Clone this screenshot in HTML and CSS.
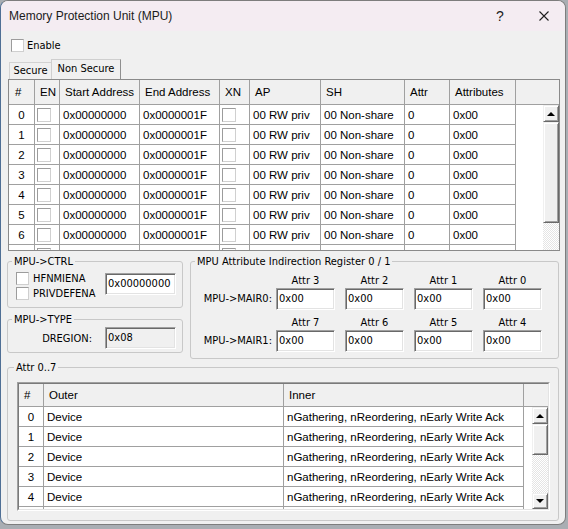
FILE: index.html
```html
<!DOCTYPE html>
<html>
<head>
<meta charset="utf-8">
<link rel="stylesheet" href="styles.css">
</head>
<body>
<div class="window">
  <div class="titlebar">
    <span class="title">Memory Protection Unit (MPU)</span>
    <span class="help">?</span>
    <svg class="close" width="10" height="10" viewBox="0 0 10 10"><path d="M0.5 0.5L9.5 9.5M9.5 0.5L0.5 9.5" stroke="#1f1f1f" stroke-width="1.1" fill="none"/></svg>
  </div>
  <div class="content">
    <div class="enable"><span class="cb"></span><span class="lbl">Enable</span></div>
    <div class="tabs"><div class="tab">Secure</div><div class="tab active">Non Secure</div></div>

    <div class="tgrid">
      <div class="thead">
        <div class="hnum">#</div><div>EN</div><div>Start Address</div><div>End Address</div><div>XN</div><div>AP</div><div>SH</div><div>Attr</div><div>Attributes</div><div class="hx"></div>
      </div>
      <div class="tbody">
        <div class="trows">
          <div class="trow"><div class="num">0</div><div class="cbc"><span class="gcb"></span></div><div>0x00000000</div><div>0x0000001F</div><div class="cbc"><span class="gcb"></span></div><div>00 RW priv</div><div>00 Non-share</div><div>0</div><div>0x00</div></div>
          <div class="trow"><div class="num">1</div><div class="cbc"><span class="gcb"></span></div><div>0x00000000</div><div>0x0000001F</div><div class="cbc"><span class="gcb"></span></div><div>00 RW priv</div><div>00 Non-share</div><div>0</div><div>0x00</div></div>
          <div class="trow"><div class="num">2</div><div class="cbc"><span class="gcb"></span></div><div>0x00000000</div><div>0x0000001F</div><div class="cbc"><span class="gcb"></span></div><div>00 RW priv</div><div>00 Non-share</div><div>0</div><div>0x00</div></div>
          <div class="trow"><div class="num">3</div><div class="cbc"><span class="gcb"></span></div><div>0x00000000</div><div>0x0000001F</div><div class="cbc"><span class="gcb"></span></div><div>00 RW priv</div><div>00 Non-share</div><div>0</div><div>0x00</div></div>
          <div class="trow"><div class="num">4</div><div class="cbc"><span class="gcb"></span></div><div>0x00000000</div><div>0x0000001F</div><div class="cbc"><span class="gcb"></span></div><div>00 RW priv</div><div>00 Non-share</div><div>0</div><div>0x00</div></div>
          <div class="trow"><div class="num">5</div><div class="cbc"><span class="gcb"></span></div><div>0x00000000</div><div>0x0000001F</div><div class="cbc"><span class="gcb"></span></div><div>00 RW priv</div><div>00 Non-share</div><div>0</div><div>0x00</div></div>
          <div class="trow"><div class="num">6</div><div class="cbc"><span class="gcb"></span></div><div>0x00000000</div><div>0x0000001F</div><div class="cbc"><span class="gcb"></span></div><div>00 RW priv</div><div>00 Non-share</div><div>0</div><div>0x00</div></div>
          <div class="trow"><div class="num">7</div><div class="cbc"><span class="gcb"></span></div><div>0x00000000</div><div>0x0000001F</div><div class="cbc"><span class="gcb"></span></div><div>00 RW priv</div><div>00 Non-share</div><div>0</div><div>0x00</div></div>
        </div>
        <div class="spacer"></div>
        <div class="vsb">
          <div class="sbtn up"><span class="arr-up"></span></div>
          <div class="thumb t-top"></div>
          <div class="track"></div>
        </div>
      </div>
    </div>

    <div class="middle">
      <div class="leftcol">
        <fieldset class="grp ctrl">
          <legend>MPU-&gt;CTRL</legend>
          <div class="ctrl-row">
            <div class="checks">
              <div class="chk"><span class="cb"></span><span class="lbl">HFNMIENA</span></div>
              <div class="chk"><span class="cb"></span><span class="lbl">PRIVDEFENA</span></div>
            </div>
            <div class="tb wide">0x00000000</div>
          </div>
        </fieldset>
        <fieldset class="grp type">
          <legend>MPU-&gt;TYPE</legend>
          <div class="type-row">
            <span class="lbl">DREGION:</span>
            <div class="tb wide ro">0x08</div>
          </div>
        </fieldset>
      </div>
      <fieldset class="grp mair">
        <legend>MPU Attribute Indirection Register 0 / 1</legend>
        <div class="mair-grid">
          <div></div><div class="al">Attr 3</div><div class="al">Attr 2</div><div class="al">Attr 1</div><div class="al">Attr 0</div>
          <div class="rl">MPU-&gt;MAIR0:</div><div class="tb sm">0x00</div><div class="tb sm">0x00</div><div class="tb sm">0x00</div><div class="tb sm">0x00</div>
          <div></div><div class="al">Attr 7</div><div class="al">Attr 6</div><div class="al">Attr 5</div><div class="al">Attr 4</div>
          <div class="rl">MPU-&gt;MAIR1:</div><div class="tb sm">0x00</div><div class="tb sm">0x00</div><div class="tb sm">0x00</div><div class="tb sm">0x00</div>
        </div>
      </fieldset>
    </div>

    <fieldset class="grp attrs">
      <legend>Attr 0..7</legend>
      <div class="bgrid">
        <div class="bgrid-in">
          <div class="bhead"><div>#</div><div>Outer</div><div>Inner</div><div class="hx"></div></div>
          <div class="bbody">
            <div class="brows">
              <div class="brow"><div class="num">0</div><div>Device</div><div>nGathering, nReordering, nEarly Write Ack</div></div>
              <div class="brow"><div class="num">1</div><div>Device</div><div>nGathering, nReordering, nEarly Write Ack</div></div>
              <div class="brow"><div class="num">2</div><div>Device</div><div>nGathering, nReordering, nEarly Write Ack</div></div>
              <div class="brow"><div class="num">3</div><div>Device</div><div>nGathering, nReordering, nEarly Write Ack</div></div>
              <div class="brow"><div class="num">4</div><div>Device</div><div>nGathering, nReordering, nEarly Write Ack</div></div>
              <div class="brow"><div class="num">5</div><div>Device</div><div>nGathering, nReordering, nEarly Write Ack</div></div>
            </div>
            <div class="bspacer"></div>
            <div class="vsb">
              <div class="sbtn up"><span class="arr-up"></span></div>
              <div class="thumb t-bot"></div>
              <div class="track"></div>
              <div class="sbtn dn"><span class="arr-dn"></span></div>
            </div>
          </div>
        </div>
      </div>
    </fieldset>
  </div>
</div>
</body>
</html>
```
FILE: styles.css
```css
html, body {
  margin: 0;
  padding: 0;
  background: #a9aeb3;
}

.window {
  width: 566px;
  height: 525px;
  box-sizing: border-box;
  border: 1px solid #7d7d7d;
  border-left-color: #4f6f95;
  border-radius: 8px;
  background: #f0f0f0;
  overflow: hidden;
  font-family: "DejaVu Sans Condensed", "DejaVu Sans", sans-serif;
  font-size: 11px;
  color: #000;
}

/* title bar */
.titlebar {
  height: 30px;
  display: flex;
  align-items: center;
  padding: 0 16px 0 8px;
  background: #f4ecf2;
}
.title {
  font-family: "Liberation Sans", sans-serif;
  font-size: 12px;
  color: #1b1b1b;
}
.help {
  margin-left: auto;
  margin-right: 35px;
  width: 8px;
  font-family: "Liberation Sans", sans-serif;
  font-size: 14px;
  color: #1b1b1b;
}
.close { display: block; }

.content { padding-left: 6px; }

/* checkboxes */
.cb {
  display: block;
  width: 13px;
  height: 13px;
  box-sizing: border-box;
  border: 1px solid;
  border-color: #9c9c9c #cfcfcf #cfcfcf #9c9c9c;
  background: #fff;
  flex: none;
}
.lbl { line-height: 13px; white-space: nowrap; }

.enable {
  display: flex;
  align-items: flex-start;
  height: 28px;
  box-sizing: border-box;
  padding: 8px 0 0 4px;
}
.enable .lbl { margin-left: 3px; }

/* tabs */
.tabs {
  display: flex;
  align-items: flex-end;
  height: 20px;
  margin-left: 2px;
}
.tab {
  width: 42px;
  height: 17px;
  box-sizing: border-box;
  border-top: 1px solid #d2d2d2;
  border-left: 1px solid #d2d2d2;
  text-align: center;
  line-height: 16px;
  white-space: nowrap;
}
.tab.active {
  width: 70px;
  height: 20px;
  border-top-color: #cfcfcf;
  border-left-color: #cfcfcf;
  border-right: 1px solid #8f8f8f;
  line-height: 18px;
}

/* top grid */
.tgrid {
  margin-left: 1px;
  width: 552px;
  height: 172px;
  box-sizing: border-box;
  border: 1px solid #8a8a8a;
  background: #fff;
  overflow: hidden;
  font-family: "Liberation Sans", sans-serif;
  font-size: 11.5px;
}
.thead {
  display: grid;
  grid-template-columns: 26px 25px 80px 80px 30px 71px 84px 45px 66px 43px;
  height: 25px;
  box-sizing: border-box;
  background: #f0f0f0;
  border-bottom: 1px solid #a0a0a0;
}
.thead > div, .bhead > div {
  border-right: 1px solid #a0a0a0;
  padding-left: 5px;
  line-height: 24px;
  white-space: nowrap;
  overflow: hidden;
}
.thead > .hnum { padding-left: 6px; }
.thead > .hx, .bhead > .hx { border-right: none; }

.tbody {
  display: flex;
  height: 145px;
  overflow: hidden;
}
.trows { width: 507px; flex: none; }
.trow {
  display: grid;
  grid-template-columns: 26px 25px 80px 80px 30px 71px 84px 45px 66px;
  height: 20px;
  box-sizing: border-box;
  border-bottom: 1px solid #a0a0a0;
}
.trow > div, .brow > div {
  display: flex;
  align-items: center;
  border-right: 1px solid #a0a0a0;
  padding-left: 3px;
  white-space: nowrap;
  overflow: hidden;
}
.trow > .num, .brow > .num {
  justify-content: center;
  padding-left: 0;
}
.trow > .cbc { padding-left: 2px; }
.gcb {
  display: block;
  width: 14px;
  height: 14px;
  box-sizing: border-box;
  border: 1px solid;
  border-color: #9c9c9c #d0d0d0 #d0d0d0 #9c9c9c;
  background: #fff;
}
.spacer { flex: 1; }

/* scrollbars */
.vsb {
  width: 16px;
  flex: none;
  display: flex;
  flex-direction: column;
  background: repeating-conic-gradient(#ffffff 0 25%, #e4e4e4 0 50%) 0 0 / 2px 2px;
}
.sbtn, .thumb {
  box-sizing: border-box;
  background: #f0f0f0;
  border: 1px solid;
  border-color: #f0f0f0 #696969 #696969 #f0f0f0;
  box-shadow: inset 1px 1px 0 #ffffff, inset -1px -1px 0 #a0a0a0;
  flex: none;
}
.sbtn {
  height: 17px;
  display: flex;
  align-items: center;
  justify-content: center;
}
.sbtn.dn { height: 16px; }
.arr-up {
  width: 0;
  height: 0;
  border-left: 4px solid transparent;
  border-right: 4px solid transparent;
  border-bottom: 4px solid #000;
}
.arr-dn {
  width: 0;
  height: 0;
  border-left: 4px solid transparent;
  border-right: 4px solid transparent;
  border-top: 4px solid #000;
}
.t-top { height: 101px; }
.t-bot { height: 31px; }
.track { flex: 1; }

/* group boxes */
.grp {
  margin: 0;
  padding: 0;
  min-width: 0;
  border: 1px solid #c8c8c8;
  border-radius: 3px;
  box-sizing: border-box;
}
.grp legend {
  margin-left: 4px;
  padding: 0 2px;
  line-height: 13px;
  white-space: nowrap;
}

.middle {
  display: flex;
  align-items: flex-start;
  gap: 7px;
  margin-top: 4px;
}
.leftcol { width: 176px; flex: none; }

.ctrl { padding: 4px 6px 0 8px; }
.ctrl legend, .type legend { margin-left: -4px; }
.ctrl-row {
  display: flex;
  height: 35px;
}
.checks {
  width: 89px;
  display: flex;
  flex-direction: column;
  gap: 2px;
}
.chk { display: flex; align-items: center; }
.chk .lbl { margin-left: 4px; }
.ctrl-row .tb { margin-top: 1px; }

.type {
  margin-top: 5px;
  padding: 1px 6px 3px 8px;
}
.type-row {
  display: flex;
  justify-content: flex-end;
  align-items: center;
  gap: 13px;
}

/* text boxes */
.tb {
  height: 22px;
  box-sizing: border-box;
  border: 1px solid;
  border-color: #a0a0a0 #ffffff #ffffff #a0a0a0;
  box-shadow: inset 1px 1px 0 #696969, inset -1px -1px 0 #e3e3e3;
  background: #fff;
  padding-left: 2px;
  line-height: 20px;
  white-space: nowrap;
}
.tb.wide { width: 71px; }
.tb.sm { width: 59px; }
.tb.ro { background: #f0f0f0; }

.mair {
  width: 369px;
  flex: none;
  padding: 0 0 6px 0;
}
.mair-grid {
  display: grid;
  grid-template-columns: 85px repeat(4, 69px);
  grid-template-rows: 20px 22px 20px 22px;
}
.mair-grid .al {
  width: 59px;
  align-self: end;
  text-align: center;
  line-height: 13px;
  padding-bottom: 1px;
  white-space: nowrap;
}
.mair-grid .rl {
  text-align: right;
  padding-right: 4px;
  line-height: 22px;
  white-space: nowrap;
}

/* attr group */
.attrs {
  margin-top: 2px;
  width: 552px;
  padding: 8px 8px 9px 9px;
}
.attrs legend { margin-left: -3px; }

.bgrid {
  width: 533px;
  height: 129px;
  box-sizing: border-box;
  border: 1px solid;
  border-color: #a0a0a0 #ffffff #ffffff #a0a0a0;
  font-family: "Liberation Sans", sans-serif;
  font-size: 11.5px;
}
.bgrid-in {
  height: 127px;
  box-sizing: border-box;
  border: 1px solid;
  border-color: #7a7a7a #e3e3e3 #e3e3e3 #7a7a7a;
  background: #fff;
  overflow: hidden;
}
.bhead {
  display: grid;
  grid-template-columns: 25px 240px 240px 24px;
  height: 23px;
  box-sizing: border-box;
  background: #f0f0f0;
  border-bottom: 1px solid #a0a0a0;
}
.bhead > div { line-height: 22px; }
.bbody {
  display: flex;
  height: 102px;
  overflow: hidden;
}
.brows { width: 505px; flex: none; }
.brow {
  display: grid;
  grid-template-columns: 25px 240px 240px;
  height: 20px;
  box-sizing: border-box;
  border-bottom: 1px solid #a0a0a0;
}
.bspacer { width: 8px; flex: none; }
```
